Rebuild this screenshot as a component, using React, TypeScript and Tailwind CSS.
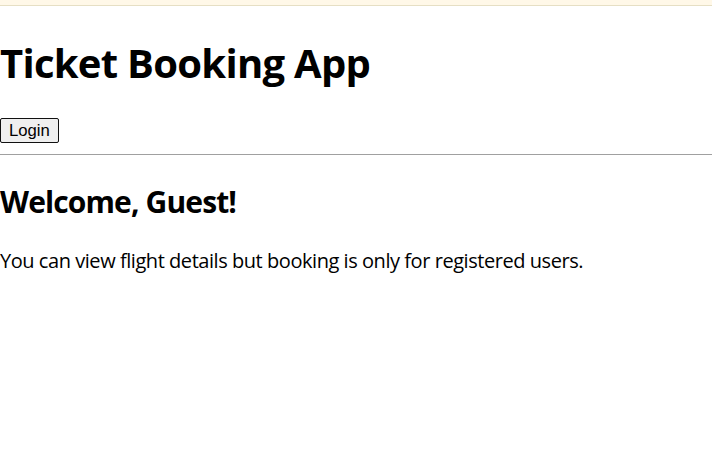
export default function App() {
  return (
    <div className="min-h-screen bg-white text-black" style={{ fontFamily: '"Open Sans", "Noto Sans", sans-serif' }}>
      <div className="h-[6px] bg-[#fff8e8] border-b border-[#e6dfc4]" />

      <div>
        <h1 className="mt-[30px] mb-[27px] text-[40px] leading-[53px] font-bold tracking-[-0.72px]">Ticket Booking App</h1>
        <div className="pt-[2px] leading-[26px]">
          <button
            className="h-[25px] px-[8px] text-[16.7px] leading-[20px] bg-[#efefef] border border-[#111] rounded-[2px] align-top"
            style={{ fontFamily: '"Liberation Sans", Arial, sans-serif' }}
          >
            Login
          </button>
        </div>
        <hr className="mt-[10px] border-t border-[#a0a0a0]" />
      </div>

      <div>
        <h2 className="mt-[27px] mb-[25px] text-[30px] leading-[40px] font-bold tracking-[-0.87px]">Welcome, Guest!</h2>
        <p className="text-[20px] leading-[27px] tracking-[-0.45px]">You can view flight details but booking is only for registered users.</p>
      </div>
    </div>
  );
}
